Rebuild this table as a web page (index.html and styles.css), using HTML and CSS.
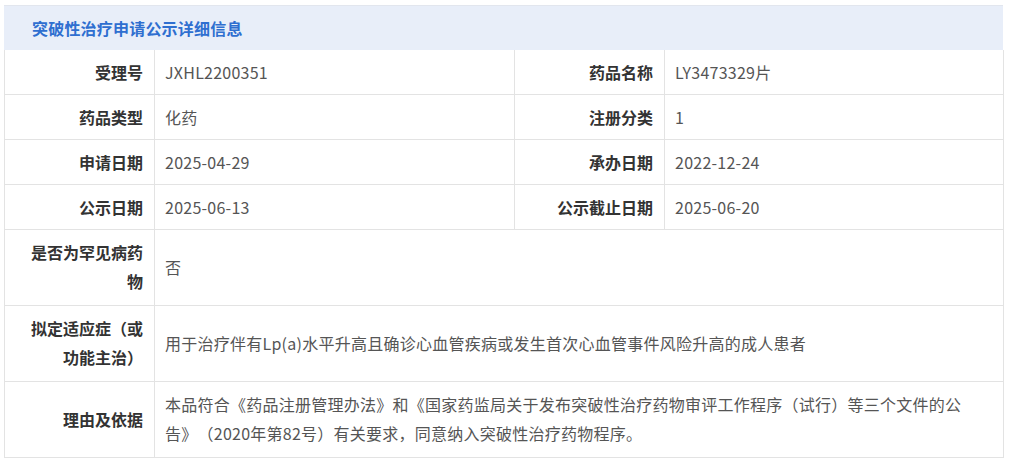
FILE: index.html
```html
<!DOCTYPE html>
<html lang="zh-CN">
<head>
<meta charset="utf-8">
<title>突破性治疗申请公示详细信息</title>
<link rel="stylesheet" href="styles.css">
</head>
<body>
<div class="panel">
  <div class="panel-head"><span class="panel-title">突破性治疗申请公示详细信息</span></div>
  <table class="detail">
    <colgroup>
      <col class="c-label"><col class="c-value1"><col class="c-label"><col class="c-value2">
    </colgroup>
    <tr>
      <th>受理号</th><td>JXHL2200351</td>
      <th>药品名称</th><td>LY3473329片</td>
    </tr>
    <tr>
      <th>药品类型</th><td>化药</td>
      <th>注册分类</th><td>1</td>
    </tr>
    <tr>
      <th>申请日期</th><td>2025-04-29</td>
      <th>承办日期</th><td>2022-12-24</td>
    </tr>
    <tr>
      <th>公示日期</th><td>2025-06-13</td>
      <th>公示截止日期</th><td>2025-06-20</td>
    </tr>
    <tr class="tall">
      <th>是否为罕见病药物</th><td colspan="3">否</td>
    </tr>
    <tr class="tall">
      <th>拟定适应症（或功能主治）</th><td colspan="3">用于治疗伴有Lp(a)水平升高且确诊心血管疾病或发生首次心血管事件风险升高的成人患者</td>
    </tr>
    <tr class="tall">
      <th>理由及依据</th><td colspan="3">本品符合《药品注册管理办法》和《国家药监局关于发布突破性治疗药物审评工作程序（试行）等三个文件的公告》（2020年第82号）有关要求，同意纳入突破性治疗药物程序。</td>
    </tr>
  </table>
</div>
</body>
</html>
```

FILE: styles.css
```css
html, body {
  margin: 0;
  padding: 0;
  background: #ffffff;
}

body {
  font-family: "Noto Sans CJK SC", "Noto Sans", "Liberation Sans", sans-serif;
  font-size: 16px;
  color: #555555;
  text-spacing-trim: space-all;
}

.panel {
  width: 999px;
  margin: 5px 0 0 4px;
}

.panel-head {
  height: 44px;
  background: #e8eef9;
  border-top: 1px solid #e2e6ee;
  display: flex;
  align-items: center;
  padding-left: 28px;
}

.panel-title {
  color: #2f6fd0;
  font-weight: bold;
  font-size: 16px;
  letter-spacing: 0.2px;
}

.detail {
  width: 999px;
  border-collapse: collapse;
  table-layout: fixed;
}

.c-label { width: 150px; }
.c-value1 { width: 360px; }
.c-value2 { width: 339px; }

.detail th,
.detail td {
  border: 1px solid #e3e3e3;
  border-top: none;
  line-height: 30px;
  padding: 7px 10px;
  vertical-align: middle;
}

.detail th {
  text-align: right;
  font-weight: bold;
  color: #333333;
  padding-left: 20px;
  padding-right: 11px;
}

.detail td {
  text-align: left;
  color: #555555;
  padding-right: 20px;
  letter-spacing: 0.25px;
}

.detail tr.tall th,
.detail tr.tall td {
  line-height: 29px;
  padding-top: 8px;
  padding-bottom: 9px;
}
```
